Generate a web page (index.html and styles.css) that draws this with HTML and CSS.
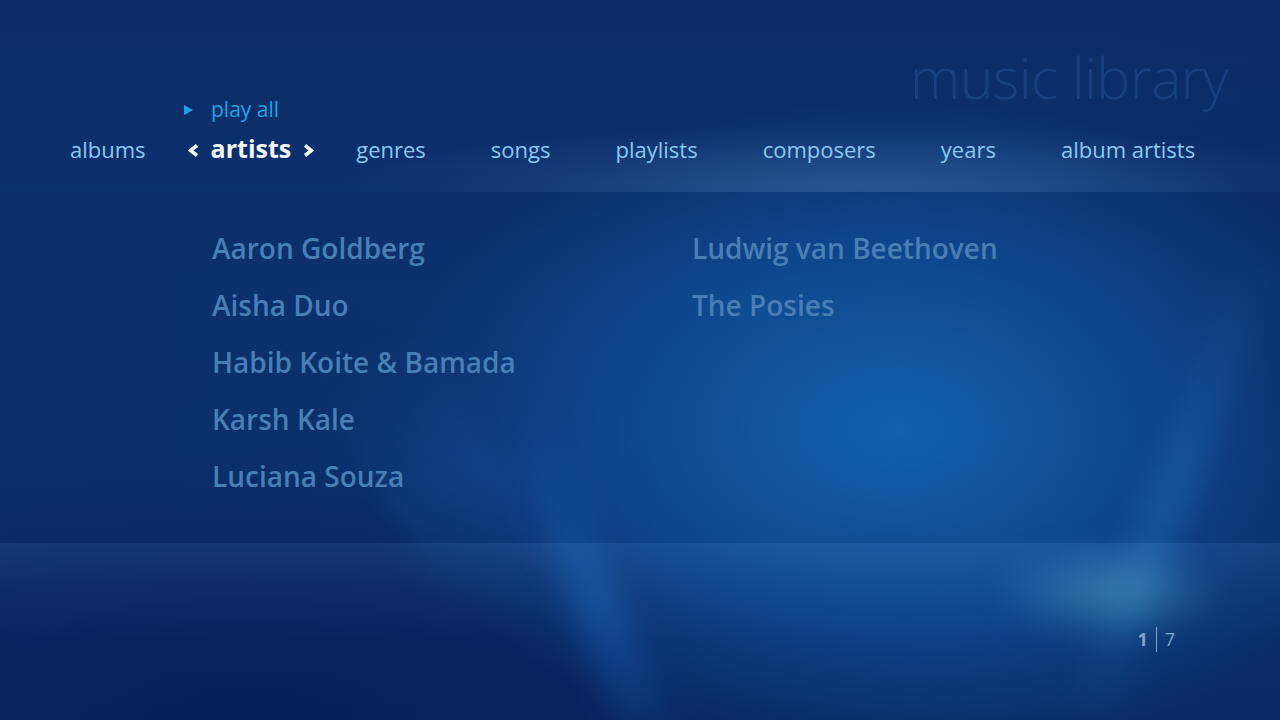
FILE: index.html
```html
<!DOCTYPE html>
<html>
<head>
<meta charset="utf-8">
<link rel="stylesheet" href="styles.css">
</head>
<body>
<div class="screen">
  <div class="bg" aria-hidden="true">
    <div class="ray ray-a"></div>
    <div class="ray ray-b"></div>
    <div class="ray ray-c"></div>
    <div class="glow"></div>
  </div>
  <header class="head">
    <h1 class="title">music library</h1>
    <div class="play-row">
      <svg class="play-icon" width="9" height="10" viewBox="0 0 9 10"><polygon points="0,0 9,5 0,10" fill="#1fa2e2"/></svg>
      <span class="play-text">play all</span>
    </div>
    <nav class="tabs">
      <span class="tab">albums</span>
      <span class="tab tab-sel">
        <svg class="chev" width="11" height="13" viewBox="0 0 11 13"><polyline points="9,1.5 2.5,6.5 9,11.5" fill="none" stroke="#f4f8fc" stroke-width="3.6" stroke-linejoin="miter"/></svg>
        <span class="sel-text">artists</span>
        <svg class="chev" width="11" height="13" viewBox="0 0 11 13"><polyline points="2,1.5 8.5,6.5 2,11.5" fill="none" stroke="#f4f8fc" stroke-width="3.6" stroke-linejoin="miter"/></svg>
      </span>
      <span class="tab">genres</span>
      <span class="tab">songs</span>
      <span class="tab">playlists</span>
      <span class="tab">composers</span>
      <span class="tab">years</span>
      <span class="tab">album artists</span>
    </nav>
  </header>
  <main class="panel">
    <ul class="col">
      <li>Aaron Goldberg</li>
      <li>Aisha Duo</li>
      <li>Habib Koite &amp; Bamada</li>
      <li>Karsh Kale</li>
      <li>Luciana Souza</li>
    </ul>
    <ul class="col">
      <li>Ludwig van Beethoven</li>
      <li>The Posies</li>
    </ul>
  </main>
  <footer class="foot">
    <div class="pager"><span class="pg-cur">1</span><span class="pg-bar"></span><span class="pg-tot">7</span></div>
  </footer>
</div>
</body>
</html>
```
FILE: styles.css
```css
html, body {
  margin: 0;
  padding: 0;
  width: 1280px;
  height: 720px;
  overflow: hidden;
  background: #0b2c68;
}
.screen {
  position: relative;
  width: 1280px;
  height: 720px;
  overflow: hidden;
  font-family: "Open Sans", "Noto Sans", sans-serif;
  display: flex;
  flex-direction: column;
  background:
    radial-gradient(ellipse 520px 330px at 900px 430px, rgba(22,110,192,0.85), rgba(22,110,192,0) 100%),
    radial-gradient(ellipse 300px 420px at 1280px 380px, rgba(8,40,100,0.7), rgba(8,40,100,0) 100%),
    radial-gradient(ellipse 700px 260px at 250px 720px, rgba(5,28,85,0.8), rgba(5,28,85,0) 100%),
    linear-gradient(180deg, #0b2c66 0%, #0c3372 40%, #0b3170 70%, #0a2a66 100%);
}
.bg {
  position: absolute;
  inset: 0;
  pointer-events: none;
}
.ray {
  position: absolute;
  filter: blur(14px);
}
.ray-a {
  left: 570px;
  top: 400px;
  width: 50px;
  height: 400px;
  transform: rotate(-22deg);
  background: linear-gradient(180deg, rgba(40,130,230,0) 0%, rgba(40,130,230,0.3) 50%, rgba(40,130,230,0) 100%);
}
.ray-b {
  left: 1150px;
  top: 230px;
  width: 45px;
  height: 520px;
  transform: rotate(20deg);
  background: linear-gradient(180deg, rgba(60,150,220,0) 0%, rgba(60,150,220,0.25) 55%, rgba(60,150,220,0) 100%);
}
.ray-c {
  left: 380px;
  top: 330px;
  width: 120px;
  height: 300px;
  transform: rotate(-30deg);
  background: linear-gradient(180deg, rgba(40,110,200,0) 0%, rgba(40,110,200,0.15) 50%, rgba(40,110,200,0) 100%);
}
.glow {
  position: absolute;
  left: 990px;
  top: 550px;
  width: 220px;
  height: 90px;
  border-radius: 50%;
  filter: blur(16px);
  background: radial-gradient(ellipse at 55% 45%, rgba(90,180,215,0.5), rgba(90,180,215,0) 70%);
}

.head {
  position: relative;
  height: 192px;
  flex: none;
  display: flex;
  flex-direction: column;
  box-sizing: border-box;
  padding-top: 49px;
  background: radial-gradient(ellipse 520px 60px at 860px 185px, rgba(140,175,215,0.2), rgba(140,175,215,0) 100%);
}
.title {
  margin: 0 52px 0 0;
  align-self: flex-end;
  font-weight: 300;
  font-size: 57px;
  line-height: 56px;
  letter-spacing: -0.6px;
  color: rgba(70,150,230,0.18);
}
.play-row {
  display: flex;
  align-items: center;
  margin-top: -8px;
  padding-left: 184px;
  height: 24px;
  gap: 18px;
}
.play-icon {
  margin-top: 1px;
}
.play-text {
  font-size: 21px;
  line-height: 24px;
  color: #1fa2e2;
}
.tabs {
  display: flex;
  align-items: baseline;
  margin-top: 11px;
  padding-left: 70px;
  height: 32px;
  gap: 65px;
}
.tab {
  font-size: 22px;
  line-height: 32px;
  color: #8cc8f0;
  white-space: nowrap;
}
.tab-sel {
  display: flex;
  align-items: baseline;
  gap: 12px;
  margin: 0 -23px;
}
.sel-text {
  font-size: 25px;
  line-height: 32px;
  font-weight: 700;
  color: #f4f8fc;
}
.chev {
  align-self: center;
  margin-top: 4px;
}

.panel {
  position: relative;
  height: 351px;
  flex: none;
  box-sizing: border-box;
  padding: 28px 0 0 212px;
  display: grid;
  grid-template-columns: 480px 1fr;
  background: linear-gradient(90deg, rgba(5,25,70,0.12), rgba(5,25,70,0.05) 60%, rgba(5,25,70,0.1));
}
.col {
  list-style: none;
  margin: 0;
  padding: 0;
}
.col li {
  font-size: 28px;
  line-height: 57px;
  font-weight: 600;
  color: #4a7eb6;
  white-space: nowrap;
}

.foot {
  position: relative;
  flex: 1;
  display: flex;
  justify-content: flex-end;
  align-items: flex-start;
  padding: 84px 105px 0 0;
  background: linear-gradient(180deg, rgba(110,160,220,0.1) 0%, rgba(110,160,220,0.04) 25%, rgba(110,160,220,0) 55%);
}
.pager {
  display: flex;
  align-items: center;
  height: 24px;
  font-size: 18px;
  line-height: 24px;
  color: #7ea4cc;
}
.pg-cur {
  font-weight: 700;
}
.pg-bar {
  width: 1px;
  height: 25px;
  margin: 0 8px 0 8px;
  background: #7ea4cc;
}
```
